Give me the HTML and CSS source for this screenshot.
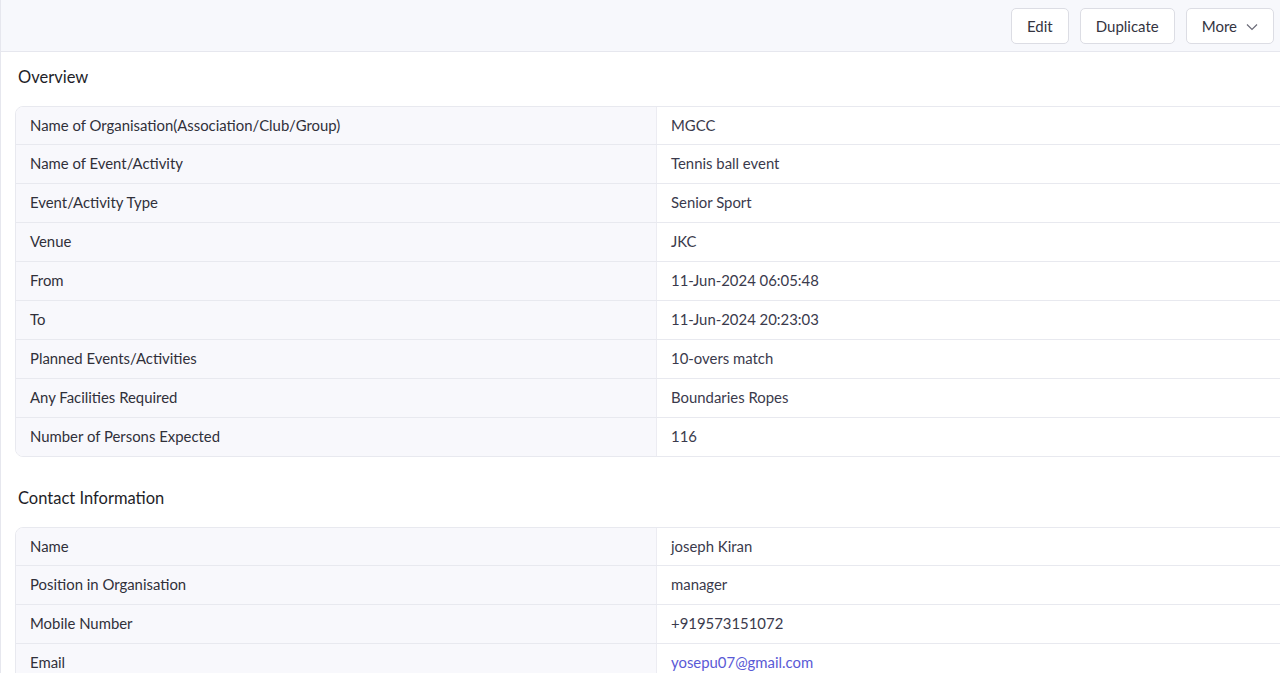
FILE: index.html
```html
<!DOCTYPE html>
<html>
<head>
<meta charset="utf-8">
<link rel="stylesheet" href="styles.css">
</head>
<body>
<div class="page">
  <header class="topbar">
    <button class="btn">Edit</button>
    <button class="btn">Duplicate</button>
    <button class="btn btn-more">More
      <svg class="chev" width="12" height="8" viewBox="0 0 12 8"><path d="M1 1.5 L6 6.5 L11 1.5" fill="none" stroke="#6b6b78" stroke-width="1.2"/></svg>
    </button>
  </header>
  <main class="content">
    <section class="section">
      <h2 class="title">Overview</h2>
      <div class="table">
        <div class="row"><div class="label">Name of Organisation(Association/Club/Group)</div><div class="value">MGCC</div></div>
        <div class="row"><div class="label">Name of Event/Activity</div><div class="value">Tennis ball event</div></div>
        <div class="row"><div class="label">Event/Activity Type</div><div class="value">Senior Sport</div></div>
        <div class="row"><div class="label">Venue</div><div class="value">JKC</div></div>
        <div class="row"><div class="label">From</div><div class="value">11-Jun-2024 06:05:48</div></div>
        <div class="row"><div class="label">To</div><div class="value">11-Jun-2024 20:23:03</div></div>
        <div class="row"><div class="label">Planned Events/Activities</div><div class="value">10-overs match</div></div>
        <div class="row"><div class="label">Any Facilities Required</div><div class="value">Boundaries Ropes</div></div>
        <div class="row"><div class="label">Number of Persons Expected</div><div class="value">116</div></div>
      </div>
    </section>
    <section class="section">
      <h2 class="title">Contact Information</h2>
      <div class="table">
        <div class="row"><div class="label">Name</div><div class="value">joseph Kiran</div></div>
        <div class="row"><div class="label">Position in Organisation</div><div class="value">manager</div></div>
        <div class="row"><div class="label">Mobile Number</div><div class="value">+919573151072</div></div>
        <div class="row"><div class="label">Email</div><div class="value"><a class="link" href="#">yosepu07@gmail.com</a></div></div>
      </div>
    </section>
  </main>
</div>
</body>
</html>
```
FILE: styles.css
```css
* { box-sizing: border-box; }
html, body { margin: 0; padding: 0; }
body {
  font-family: Lato, "Open Sans", sans-serif;
  background: #fff;
  color: #2b2b36;
  overflow: hidden;
  height: 673px;
}
.page {
  border-left: 1px solid #e6e7ee;
  height: 673px;
  overflow: hidden;
}
.topbar {
  height: 52px;
  background: #f7f8fc;
  border-bottom: 1px solid #e6e7ee;
  display: flex;
  justify-content: flex-end;
  align-items: flex-start;
  padding: 8px 6px 0 0;
  gap: 11px;
}
.btn {
  font-family: Lato, sans-serif;
  font-size: 15px;
  color: #34343f;
  background: #fff;
  border: 1px solid #dcdde4;
  border-radius: 5px;
  height: 36px;
  padding: 0 15px;
  display: flex;
  align-items: center;
  gap: 9px;
}
.chev { margin-top: 1px; }
.content {
  padding: 0 0 0 14px;
}
.title {
  font-size: 16.5px;
  font-weight: 400;
  color: #1e1e28;
  margin: 0;
  padding: 15px 0 0 3px;
  height: 54px;
  line-height: 20px;
}
.table {
  width: 1282px;
  border: 1px solid #e8e9ef;
  border-radius: 8px;
  overflow: hidden;
  margin-bottom: 16px;
}
.row {
  display: flex;
  height: 39px;
  border-top: 1px solid #e8e9ef;
}
.row:first-child { border-top: none; height: 37px; }
.label {
  width: 641px;
  background: #f8f8fc;
  border-right: 1px solid #ececf2;
  padding: 0 0 3px 14px;
  display: flex;
  align-items: center;
  font-size: 14.9px;
  color: #30303a;
}
.row:first-child .label, .row:first-child .value { padding-bottom: 2px; }
.value {
  flex: 1;
  padding: 0 0 3px 14px;
  display: flex;
  align-items: center;
  font-size: 14.9px;
  color: #3a3a4c;
}
.link {
  color: #5a5ad6;
  text-decoration: none;
}
```
